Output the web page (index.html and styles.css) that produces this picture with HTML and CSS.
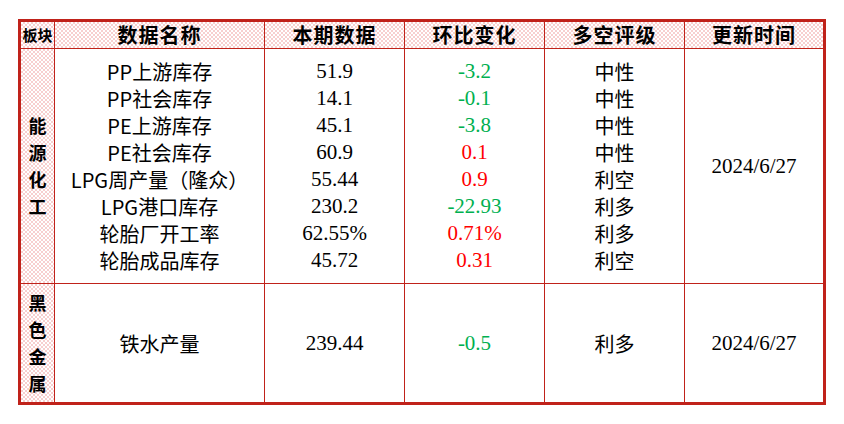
FILE: index.html
```html
<!DOCTYPE html>
<html lang="zh">
<head>
<meta charset="utf-8">
<link rel="stylesheet" href="styles.css">
</head>
<body>
<table class="grid">
  <thead>
    <tr>
      <th class="c1 small">板块</th>
      <th class="c2">数据名称</th>
      <th class="c3">本期数据</th>
      <th class="c4">环比变化</th>
      <th class="c5">多空评级</th>
      <th class="c6 last">更新时间</th>
    </tr>
  </thead>
  <tbody>
    <tr class="first">
      <td class="sector end" rowspan="8">能<br>源<br>化<br>工</td>
      <td class="name">PP上游库存</td>
      <td class="num">51.9</td>
      <td class="num down">-3.2</td>
      <td class="rate">中性</td>
      <td class="date last end" rowspan="8">2024/6/27</td>
    </tr>
    <tr>
      <td class="name">PP社会库存</td>
      <td class="num">14.1</td>
      <td class="num down">-0.1</td>
      <td class="rate">中性</td>
    </tr>
    <tr>
      <td class="name">PE上游库存</td>
      <td class="num">45.1</td>
      <td class="num down">-3.8</td>
      <td class="rate">中性</td>
    </tr>
    <tr>
      <td class="name">PE社会库存</td>
      <td class="num">60.9</td>
      <td class="num up">0.1</td>
      <td class="rate">中性</td>
    </tr>
    <tr>
      <td class="name">LPG周产量（隆众）</td>
      <td class="num">55.44</td>
      <td class="num up">0.9</td>
      <td class="rate">利空</td>
    </tr>
    <tr>
      <td class="name">LPG港口库存</td>
      <td class="num">230.2</td>
      <td class="num down">-22.93</td>
      <td class="rate">利多</td>
    </tr>
    <tr>
      <td class="name">轮胎厂开工率</td>
      <td class="num">62.55%</td>
      <td class="num up">0.71%</td>
      <td class="rate">利多</td>
    </tr>
    <tr class="lastrow">
      <td class="name end">轮胎成品库存</td>
      <td class="num end">45.72</td>
      <td class="num up end">0.31</td>
      <td class="rate end">利空</td>
    </tr>
    <tr class="single">
      <td class="sector">黑<br>色<br>金<br>属</td>
      <td class="name">铁水产量</td>
      <td class="num">239.44</td>
      <td class="num down">-0.5</td>
      <td class="rate">利多</td>
      <td class="date last">2024/6/27</td>
    </tr>
  </tbody>
</table>
</body>
</html>
```

FILE: styles.css
```css
html, body {
  margin: 0;
  background: #ffffff;
}
body {
  padding: 19px 0 0 18px;
}
.grid {
  border-collapse: separate;
  border-spacing: 0;
  table-layout: fixed;
  width: 808px;
  border: 3px solid #c0221a;
  color: #000;
}
.grid th,
.grid td {
  padding: 0;
  box-sizing: border-box;
  text-align: center;
  vertical-align: middle;
  border-right: 1px solid #c0221a;
  white-space: nowrap;
}
.grid .last {
  border-right: none;
}
.grid th {
  height: 27px;
  border-bottom: 1px solid #c0221a;
  font-family: "Noto Sans CJK SC", sans-serif;
  font-weight: 700;
  font-size: 20px;
  letter-spacing: 1px;
  line-height: 26px;
  background: repeating-conic-gradient(#f7cfcf 0 25%, #ffffff 0 50%) 0 0 / 4px 4px;
}
.grid th.small {
  font-size: 15px;
  letter-spacing: 0;
}
.c1 { width: 34px; }
.c2 { width: 210px; }
.c3 { width: 140px; }
.c4 { width: 140px; }
.c5 { width: 140px; }
.c6 { width: 138px; }

.grid td {
  line-height: 27px;
  height: 27px;
}
.grid .end {
  border-bottom: 1px solid #c0221a;
}
.grid tr.first td {
  padding-top: 9px;
  height: 36px;
}
.grid tr.lastrow td {
  padding-bottom: 9px;
  height: 37px;
}
.grid tr.first td.sector,
.grid tr.first td.date {
  padding-top: 0;
}
.sector {
  font-family: "Noto Sans CJK SC", sans-serif;
  font-weight: 700;
  font-size: 18px;
  background: repeating-conic-gradient(#f7cfcf 0 25%, #ffffff 0 50%) 0 0 / 4px 4px;
}
.name,
.rate {
  font-family: "Noto Sans CJK SC", sans-serif;
  font-size: 20px;
}
.num,
.date {
  font-family: "Liberation Serif", "Noto Sans CJK SC", serif;
  font-size: 21px;
}
.up { color: #ff0000; }
.down { color: #00b050; }
.grid tr.single td {
  height: 118px;
}
```
